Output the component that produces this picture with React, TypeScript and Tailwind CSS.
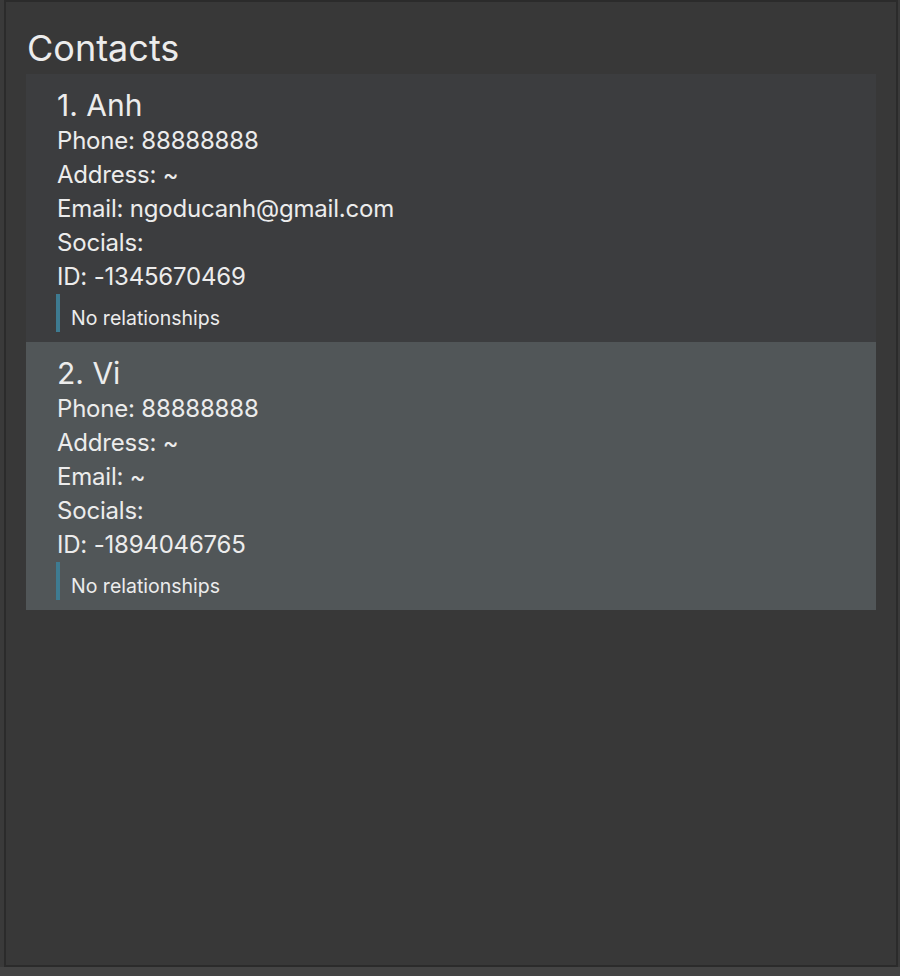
const contacts = [
  {
    name: "Anh",
    phone: "88888888",
    address: "~",
    email: "ngoducanh@gmail.com",
    id: "-1345670469",
  },
  {
    name: "Vi",
    phone: "88888888",
    address: "~",
    email: "~",
    id: "-1894046765",
  },
];

function ContactCard({ index, contact, selected }: { index: number; contact: (typeof contacts)[number]; selected: boolean }) {
  return (
    <div className={`pl-[30px] pt-[14px] pb-[10px] ${selected ? "bg-[#515658]" : "bg-[#3c3d3f]"}`}>
      <div className="pl-[1px] text-[30px] leading-[34px] h-[36px]">
        {index}. {contact.name}
      </div>
      <div className="pl-[1px] text-[24px] leading-[34px] tracking-[-0.2px]">
        <div>Phone: {contact.phone}</div>
        <div>Address: {contact.address}</div>
        <div>Email: {contact.email}</div>
        <div>Socials:</div>
        <div>ID: {contact.id}</div>
      </div>
      <div className="flex h-[38px]">
        <div className="w-[4px] bg-[#3e7b91]" />
        <div className="pl-[11px] pt-[10px] text-[19.5px] leading-[28px]">No relationships</div>
      </div>
    </div>
  );
}

export default function App() {
  return (
    <div
      className="w-[900px] h-[976px] bg-[#3a3a3a] flex flex-col text-[#ececec]"
      style={{ fontFamily: "Inter, 'Open Sans', sans-serif" }}
    >
      <div className="h-[967px] pl-[4px] pr-[2px]">
        <div className="h-[967px] border-2 border-[#2b2b2b] bg-[#383838]">
          <h1 className="pl-[21px] pt-[27px] pb-[7px] text-[36px] leading-[38px]">Contacts</h1>
          <div className="mx-[20px]">
            {contacts.map((c, i) => (
              <ContactCard key={c.id} index={i + 1} contact={c} selected={i === 1} />
            ))}
          </div>
        </div>
      </div>
      <div className="flex-1 bg-[#444444]" />
    </div>
  );
}
